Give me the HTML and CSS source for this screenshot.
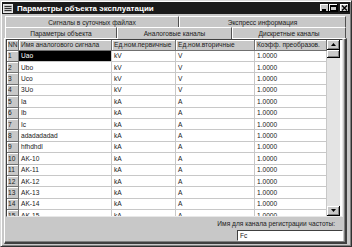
FILE: index.html
```html
<!DOCTYPE html>
<html lang="ru">
<head>
    <meta charset="UTF-8">
    <title>Параметры объекта эксплуатации</title>
    <link rel="stylesheet" href="styles.css">
</head>
<body>
    <div class="window">
        <div class="titlebar">
            <svg class="app-icon" width="10" height="9" viewBox="0 0 10 9">
                <rect x="0.5" y="0.5" width="9" height="8" fill="#c8c8c8" stroke="#e8e8e8"/>
                <rect x="1.5" y="2" width="7" height="1" fill="#303030"/>
                <rect x="1.5" y="4" width="7" height="1" fill="#303030"/>
                <rect x="1.5" y="6" width="7" height="1" fill="#303030"/>
            </svg>
            <span class="title">Параметры объекта эксплуатации</span>
            <div class="caption-buttons">
                <span class="cbtn"><svg width="7" height="6" viewBox="0 0 7 6"><rect x="1" y="4" width="4" height="2" fill="#000"/></svg></span>
                <span class="cbtn"><svg width="7" height="6" viewBox="0 0 7 6"><rect x="0.5" y="0.5" width="6" height="5" fill="none" stroke="#000"/><rect x="0" y="0" width="7" height="2" fill="#000"/></svg></span>
                <span class="cbtn close"><svg width="7" height="6" viewBox="0 0 7 6"><path d="M1 0.5 L6 5.5 M6 0.5 L1 5.5" stroke="#000" stroke-width="1.4"/></svg></span>
            </div>
        </div>

        <div class="client">
            <div class="tab-row">
                <div class="tab tab-daily">Сигналы в суточных файлах</div>
                <div class="tab tab-express">Экспресс информация</div>
            </div>
            <div class="tab-row front">
                <div class="tab tab-object">Параметры объекта</div>
                <div class="tab tab-analog active">Аналоговые каналы</div>
                <div class="tab tab-discrete">Дискретные каналы</div>
            </div>

            <div class="panel">
                <div class="grid-box">
                    <div class="grid">
                        <div class="hcell">NN</div>
                        <div class="hcell">Имя аналогового сигнала</div>
                        <div class="hcell">Ед.ном.первичные</div>
                        <div class="hcell">Ед.ном.вторичные</div>
                        <div class="hcell">Коэфф. преобразов.</div>

                        <div class="ncell">1</div><div class="cell selected">Uao</div><div class="cell">kV</div><div class="cell">V</div><div class="cell">1.0000</div>
                        <div class="ncell">2</div><div class="cell">Ubo</div><div class="cell">kV</div><div class="cell">V</div><div class="cell">1.0000</div>
                        <div class="ncell">3</div><div class="cell">Uco</div><div class="cell">kV</div><div class="cell">V</div><div class="cell">1.0000</div>
                        <div class="ncell">4</div><div class="cell">3Uo</div><div class="cell">kV</div><div class="cell">V</div><div class="cell">1.0000</div>
                        <div class="ncell">5</div><div class="cell">Ia</div><div class="cell">kA</div><div class="cell">A</div><div class="cell">1.0000</div>
                        <div class="ncell">6</div><div class="cell">Ib</div><div class="cell">kA</div><div class="cell">A</div><div class="cell">1.0000</div>
                        <div class="ncell">7</div><div class="cell">Ic</div><div class="cell">kA</div><div class="cell">A</div><div class="cell">1.0000</div>
                        <div class="ncell">8</div><div class="cell">adadadadad</div><div class="cell">kA</div><div class="cell">A</div><div class="cell">1.0000</div>
                        <div class="ncell">9</div><div class="cell">hfhdhdl</div><div class="cell">kA</div><div class="cell">A</div><div class="cell">1.0000</div>
                        <div class="ncell">10</div><div class="cell">AK-10</div><div class="cell">kA</div><div class="cell">A</div><div class="cell">1.0000</div>
                        <div class="ncell">11</div><div class="cell">AK-11</div><div class="cell">kA</div><div class="cell">A</div><div class="cell">1.0000</div>
                        <div class="ncell">12</div><div class="cell">AK-12</div><div class="cell">kA</div><div class="cell">A</div><div class="cell">1.0000</div>
                        <div class="ncell">13</div><div class="cell">AK-13</div><div class="cell">kA</div><div class="cell">A</div><div class="cell">1.0000</div>
                        <div class="ncell">14</div><div class="cell">AK-14</div><div class="cell">kA</div><div class="cell">A</div><div class="cell">1.0000</div>
                        <div class="ncell">15</div><div class="cell">AK-15</div><div class="cell">kA</div><div class="cell">A</div><div class="cell">1.0000</div>
                    </div>
                    <div class="vscroll">
                        <div class="sbtn"><svg width="5" height="3" viewBox="0 0 5 3"><path d="M2.5 0 L5 3 L0 3 Z" fill="#000"/></svg></div>
                        <div class="thumb"></div>
                        <div class="track"></div>
                        <div class="sbtn"><svg width="5" height="3" viewBox="0 0 5 3"><path d="M0 0 L5 0 L2.5 3 Z" fill="#000"/></svg></div>
                    </div>
                </div>

                <div class="freq">
                    <label class="freq-label" for="freq">Имя для канала регистрации частоты:</label>
                    <div class="edit" id="freq">Fc</div>
                </div>
            </div>
        </div>
    </div>
</body>
</html>
```

FILE: styles.css
```css
body {
    margin: 0;
    font-family: "Liberation Sans", Arial, sans-serif;
    background-color: #c8c8c8;
}

.window {
    width: 352px;
    height: 247px;
    box-sizing: border-box;
    display: flex;
    flex-direction: column;
    background-color: #c8c8c8;
    border: 1px solid;
    border-color: #d8d8d8 #303030 #303030 #d8d8d8;
    box-shadow: inset 1px 1px 0 #fff, inset -1px -1px 0 #808080;
    padding: 1px;
}

/* title bar */
.titlebar {
    height: 12px;
    display: flex;
    align-items: center;
    background-color: #1a1a1a;
    flex-shrink: 0;
}

.app-icon {
    margin-left: 1px;
    margin-right: 4px;
}

.title {
    color: #fff;
    font-weight: bold;
    font-size: 8px;
    white-space: nowrap;
    flex: 1;
}

.caption-buttons {
    display: flex;
    margin-right: 1px;
}

.cbtn {
    width: 9px;
    height: 8px;
    box-sizing: border-box;
    display: flex;
    align-items: center;
    justify-content: center;
    background-color: #c8c8c8;
    border-right: 1px solid #000;
    border-bottom: 1px solid #000;
    box-shadow: inset 1px 1px 0 #fff;
}

.cbtn.close {
    margin-left: 2px;
}

/* client area */
.client {
    flex: 1;
    display: flex;
    flex-direction: column;
    padding: 2px 3px 1px 2px;
}

.tab-row {
    display: flex;
    height: 11px;
    margin: 0 1px;
}

.tab-row.front {
    position: relative;
    z-index: 1;
}

.tab {
    box-sizing: border-box;
    font-size: 6.6px;
    color: #202020;
    text-align: center;
    line-height: 11px;
    white-space: nowrap;
    border-top: 1px solid #fff;
    border-left: 1px solid #fff;
    border-right: 1px solid #505050;
}

.tab-daily { width: 174px; }
.tab-express { flex: 1; }
.tab-object { width: 112px; }
.tab-analog { width: 115px; }
.tab-discrete { flex: 1; }

.tab.active {
    height: 12px;
    background-color: #c8c8c8;
}

/* page panel */
.panel {
    flex: 1;
    display: flex;
    flex-direction: column;
    border-top: 1px solid #fff;
    border-left: 1px solid #fff;
    border-right: 2px solid #404040;
    border-bottom: 2px solid #404040;
    box-shadow: inset -1px -1px 0 #808080;
}

.grid-box {
    height: 178px;
    box-sizing: border-box;
    margin: 0 2px 0 1px;
    display: flex;
    border: 1px solid;
    border-color: #404040 #e8e8e8 #e8e8e8 #404040;
    background-color: #fff;
    overflow: hidden;
}

.grid {
    display: grid;
    grid-template-columns: 12px 93px 64px 79px 72px;
    grid-template-rows: 10.6px;
    grid-auto-rows: 11.4px;
    align-content: start;
    overflow: hidden;
}

.hcell,
.ncell,
.cell {
    box-sizing: border-box;
    font-size: 6.6px;
    color: #202020;
    padding-left: 2px;
    white-space: nowrap;
    overflow: hidden;
    display: flex;
    align-items: center;
}

.hcell,
.ncell {
    background-color: #c8c8c8;
    border-right: 1px solid #707070;
    border-bottom: 1px solid #707070;
    box-shadow: inset 1px 1px 0 #fff;
    padding-left: 1px;
}

.hcell {
    padding-left: 2px;
}

.hcell:first-child {
    padding-left: 1px;
}

.cell {
    background-color: #fff;
    border-right: 1px solid #c8c8c8;
    border-bottom: 1px solid #c8c8c8;
}

.cell.selected {
    background-color: #000;
    color: #fff;
}

/* scrollbar */
.vscroll {
    width: 13px;
    display: flex;
    flex-direction: column;
    flex-shrink: 0;
}

.sbtn,
.thumb {
    box-sizing: border-box;
    background-color: #c8c8c8;
    border-right: 1px solid #000;
    border-bottom: 1px solid #000;
    box-shadow: inset 1px 1px 0 #fff, inset -1px -1px 0 #808080;
    display: flex;
    align-items: center;
    justify-content: center;
}

.sbtn {
    height: 10px;
}

.thumb {
    height: 8px;
}

.track {
    flex: 1;
    background-color: #e4e4e4;
}

/* frequency channel */
.freq {
    flex: 1;
    display: flex;
    flex-direction: column;
    align-items: flex-end;
    margin-right: 2px;
}

.freq-label {
    font-size: 6.6px;
    color: #202020;
    margin-top: 3px;
    margin-right: 8px;
    line-height: 7px;
}

.edit {
    width: 106px;
    height: 11px;
    box-sizing: border-box;
    margin-top: 3px;
    background-color: #fff;
    border: 1px solid;
    border-color: #404040 #fff #fff #404040;
    font-size: 6.6px;
    color: #202020;
    padding-left: 2px;
    line-height: 9px;
}
```
